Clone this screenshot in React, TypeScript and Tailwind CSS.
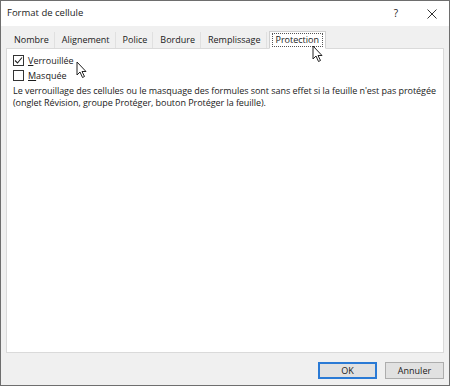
import { useState } from 'react';

const tabs = ['Nombre', 'Alignement', 'Police', 'Bordure', 'Remplissage', 'Protection'];

function Cursor({ className }: { className: string }) {
    return (
        <svg className={className} width="12" height="18" viewBox="0 0 12 18">
            <path d="M1 1 L1 14 L4 11 L6.5 16.5 L8.5 15.5 L6 10.5 L10 10.5 Z" fill="#fff" stroke="#222" strokeWidth="1" strokeLinejoin="round" />
        </svg>
    );
}

function Check({ checked, label, onToggle }: { checked: boolean; label: string; onToggle: () => void }) {
    return (
        <label className="flex items-center gap-[4px] h-[15px] cursor-default" onClick={onToggle}>
            <span className="w-[11px] h-[11px] border border-[#333] bg-white flex items-center justify-center">
                {checked && (
                    <svg width="9" height="9" viewBox="0 0 9 9">
                        <path d="M1 4.5 L3.5 7 L8 1.5" fill="none" stroke="#222" strokeWidth="1.1" />
                    </svg>
                )}
            </span>
            <span><span className="underline">{label[0]}</span>{label.slice(1)}</span>
        </label>
    );
}

export default function App() {
    const [locked, setLocked] = useState(true);
    const [hidden, setHidden] = useState(false);

    return (
        <div className="w-[450px] h-[386px] border border-[#6e6e6e] bg-[#f0f0f0] flex flex-col text-[#1a1a1a] font-['Open_Sans',sans-serif] text-[9px] relative overflow-hidden">
            <div className="h-[25px] bg-white flex items-center pl-[6px] pr-[12px] shrink-0">
                <span className="text-[9.5px] text-[#222]">Format de cellule</span>
                <span className="ml-auto text-[10px] mr-[29px]">?</span>
                <svg width="10" height="10" viewBox="0 0 10 10">
                    <path d="M0.5 0.5 L9.5 9.5 M9.5 0.5 L0.5 9.5" stroke="#333" strokeWidth="1" />
                </svg>
            </div>

            <div className="flex-1 flex flex-col px-[5px] pt-[4px]">
                <div className="flex items-end pl-[3px] h-[18px] relative z-10 font-medium">
                    {tabs.map(t =>
                        t === 'Protection' ? (
                            <div key={t} className="h-[18px] mb-[-1px] px-[2px] bg-white border border-[#d0d0d0] border-b-white flex items-center">
                                <span className="border border-dotted border-[#555] px-[3px] leading-[12px]">{t}</span>
                            </div>
                        ) : (
                            <div key={t} className="h-[16px] px-[5px] mr-[2px] bg-[#f0f0f0] border-r border-[#e0e0e0] flex items-center">
                                {t}
                            </div>
                        )
                    )}
                </div>

                <div className="flex-1 bg-white border border-[#dadada] px-[6px] pt-[4px]">
                    <Check checked={locked} label="Verrouillée" onToggle={() => setLocked(!locked)} />
                    <Check checked={hidden} label="Masquée" onToggle={() => setHidden(!hidden)} />
                    <p className="mt-[2px] leading-[12px] font-medium whitespace-nowrap tracking-[-0.05px]">
                        Le verrouillage des cellules ou le masquage des formules sont sans effet si la feuille n'est pas protégée
                        <br />
                        (onglet Révision, groupe Protéger, bouton Protéger la feuille).
                    </p>
                </div>

                <div className="h-[32px] shrink-0 flex items-start justify-end gap-[8px] pt-[9px]">
                    <button className="w-[59px] h-[17px] bg-[#e1e1e1] border-2 border-[#2a7ad5] flex items-center justify-center">OK</button>
                    <button className="w-[59px] h-[17px] bg-[#e1e1e1] border border-[#adadad] flex items-center justify-center">Annuler</button>
                </div>
            </div>

            <Cursor className="absolute left-[75px] top-[60px]" />
            <Cursor className="absolute left-[311px] top-[44px] z-20" />
        </div>
    );
}
